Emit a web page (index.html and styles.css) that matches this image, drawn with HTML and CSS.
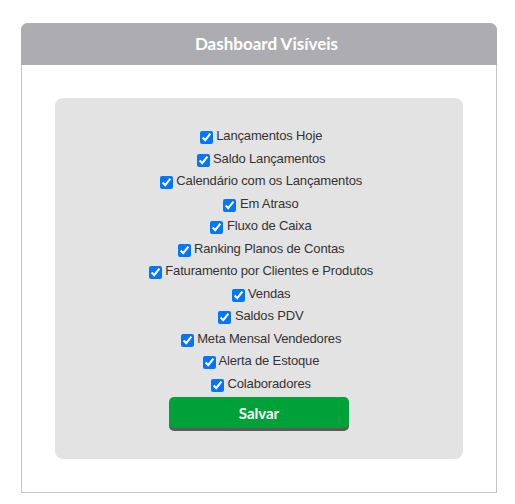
FILE: index.html
```html
<!DOCTYPE html>
<html lang="pt">
<head>
<meta charset="utf-8">
<link rel="stylesheet" href="styles.css">
</head>
<body>
<div class="card">
  <div class="card-header">Dashboard Visíveis</div>
  <div class="card-body">
    <div class="panel">
      <label class="opt"><input type="checkbox" checked> Lançamentos Hoje</label>
      <label class="opt"><input type="checkbox" checked> Saldo Lançamentos</label>
      <label class="opt"><input type="checkbox" checked> Calendário com os Lançamentos</label>
      <label class="opt"><input type="checkbox" checked> Em Atraso</label>
      <label class="opt"><input type="checkbox" checked> Fluxo de Caixa</label>
      <label class="opt"><input type="checkbox" checked> Ranking Planos de Contas</label>
      <label class="opt"><input type="checkbox" checked> Faturamento por Clientes e Produtos</label>
      <label class="opt"><input type="checkbox" checked> Vendas</label>
      <label class="opt"><input type="checkbox" checked> Saldos PDV</label>
      <label class="opt"><input type="checkbox" checked> Meta Mensal Vendedores</label>
      <label class="opt"><input type="checkbox" checked> Alerta de Estoque</label>
      <label class="opt"><input type="checkbox" checked> Colaboradores</label>
      <button class="btn" type="button">Salvar</button>
    </div>
  </div>
</div>
</body>
</html>
```

FILE: styles.css
```css
html, body {
  margin: 0;
  padding: 0;
  background: #ffffff;
}
body {
  padding: 23px 19px 0 21px;
  font-family: "Liberation Sans", Arial, sans-serif;
}
.card {
  width: 476px;
  box-sizing: border-box;
  border: 1px solid #c6c6c6;
  border-top: none;
  border-radius: 7px 7px 0 0;
}
.card-header {
  height: 42px;
  margin: 0 -1px;
  padding-left: 15px;
  background: #adadb1;
  border-radius: 7px 7px 0 0;
  color: #ffffff;
  font-family: Lato, "Open Sans", sans-serif;
  font-weight: 700;
  font-size: 17px;
  line-height: 42px;
  text-align: center;
}
.card-body {
  padding: 33px 33px 33px 33px;
}
.panel {
  background: #e3e3e3;
  border-radius: 8px;
  padding: 27px 0 31px;
  display: flex;
  flex-direction: column;
  align-items: center;
}
.opt {
  display: block;
  font-size: 13px;
  letter-spacing: -0.15px;
  line-height: 22.5px;
  color: #333333;
  white-space: nowrap;
}
.opt input {
  margin: 3px 0 3px 4px;
  vertical-align: -4px;
}
.btn {
  margin-top: 2px;
  width: 180px;
  height: 31px;
  border: none;
  border-radius: 5px;
  background: #00a139;
  box-shadow: 0 3px 0 #5a5a5a;
  color: #ffffff;
  font-family: Lato, "Open Sans", sans-serif;
  font-weight: 700;
  font-size: 15px;
  padding: 0;
}
```
